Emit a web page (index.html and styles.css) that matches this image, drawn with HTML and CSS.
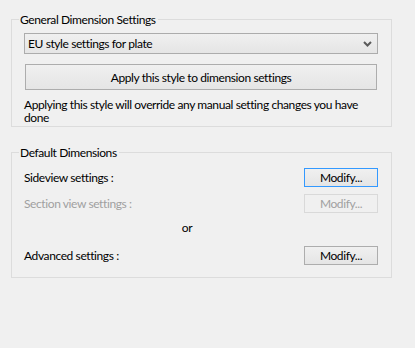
FILE: index.html
```html
<!DOCTYPE html>
<html>
<head>
<meta charset="utf-8">
<link rel="stylesheet" href="styles.css">
</head>
<body>
<div class="page">
  <fieldset class="group group-general">
    <legend class="legend">General Dimension Settings</legend>
    <div class="combo">
      <span class="combo-text">EU style settings for plate</span>
      <svg class="chevron" width="9" height="6" viewBox="0 0 9 6"><path d="M1 1 L4.5 4.5 L8 1" fill="none" stroke="#5a5a5a" stroke-width="2"/></svg>
    </div>
    <button class="btn btn-wide">Apply this style to dimension settings</button>
    <p class="note">Applying this style will override any manual setting changes you have done</p>
  </fieldset>

  <fieldset class="group group-default">
    <legend class="legend">Default Dimensions</legend>
    <div class="row row-side">
      <span class="label">Sideview settings :</span>
      <button class="btn btn-small btn-focus">Modify...</button>
    </div>
    <div class="row row-section">
      <span class="label disabled">Section view settings :</span>
      <button class="btn btn-small btn-disabled">Modify...</button>
    </div>
    <div class="or">or</div>
    <div class="row row-adv">
      <span class="label">Advanced settings :</span>
      <button class="btn btn-small">Modify...</button>
    </div>
  </fieldset>
</div>
</body>
</html>
```

FILE: styles.css
```css
html, body {
  margin: 0;
  padding: 0;
  background: #f0f0f0;
}
body {
  width: 415px;
  height: 348px;
  overflow: hidden;
  font-family: Lato, "Noto Sans", sans-serif;
  font-size: 12px;
  letter-spacing: -0.4px;
  color: #000;
}
.page {
  padding: 12px 0 0 11px;
  width: 381px;
}
.group {
  margin: 0;
  border: 1px solid #dcdcdc;
  padding: 0 13px 0 12px;
  min-width: 0;
}
.legend {
  padding: 0 2px 0 1px;
  margin-left: -5px;
  line-height: 15px;
  height: 15px;
  font-size: 12px;
}
.group-general {
  padding-top: 6px;
  box-sizing: border-box;
  height: 115px;
}
.combo {
  height: 21px;
  box-sizing: border-box;
  border: 1px solid #acacac;
  background: linear-gradient(#f0f0f0, #e5e5e5);
  display: flex;
  align-items: center;
  justify-content: space-between;
  padding: 0 5px 0 3px;
}
.combo-text {
  line-height: 17px;
}
.chevron {
  display: block;
}
.btn {
  font-family: inherit;
  font-size: 12px;
  letter-spacing: -0.4px;
  color: #000;
  border: 1px solid #adadad;
  background: linear-gradient(#f0f0f0, #e5e5e5);
  padding: 0;
  margin: 0;
  box-sizing: border-box;
  display: block;
}
.btn-wide {
  width: 352px;
  height: 26px;
  margin: 10px 0 0 1px;
}
.note {
  margin: 8px 0 0 0;
  line-height: 13px;
}
.group-default {
  margin-top: 18px;
  padding-top: 8px;
  height: 133px;
  box-sizing: border-box;
}
.row {
  display: flex;
  align-items: center;
  justify-content: space-between;
  height: 19px;
}
.row-section {
  margin-top: 7px;
}
.label {
  line-height: 19px;
}
.disabled {
  color: #a0a0a0;
}
.btn-small {
  width: 74px;
  height: 19px;
  line-height: 15px;
}
.btn-focus {
  border-color: #3399ff;
}
.btn-disabled {
  border-color: #d9d9d9;
  background: #f0f0f0;
  color: #a0a0a0;
}
.or {
  text-align: center;
  height: 17px;
  line-height: 17px;
  margin: 6px 0 10px 0;
  padding-right: 28px;
}
```
